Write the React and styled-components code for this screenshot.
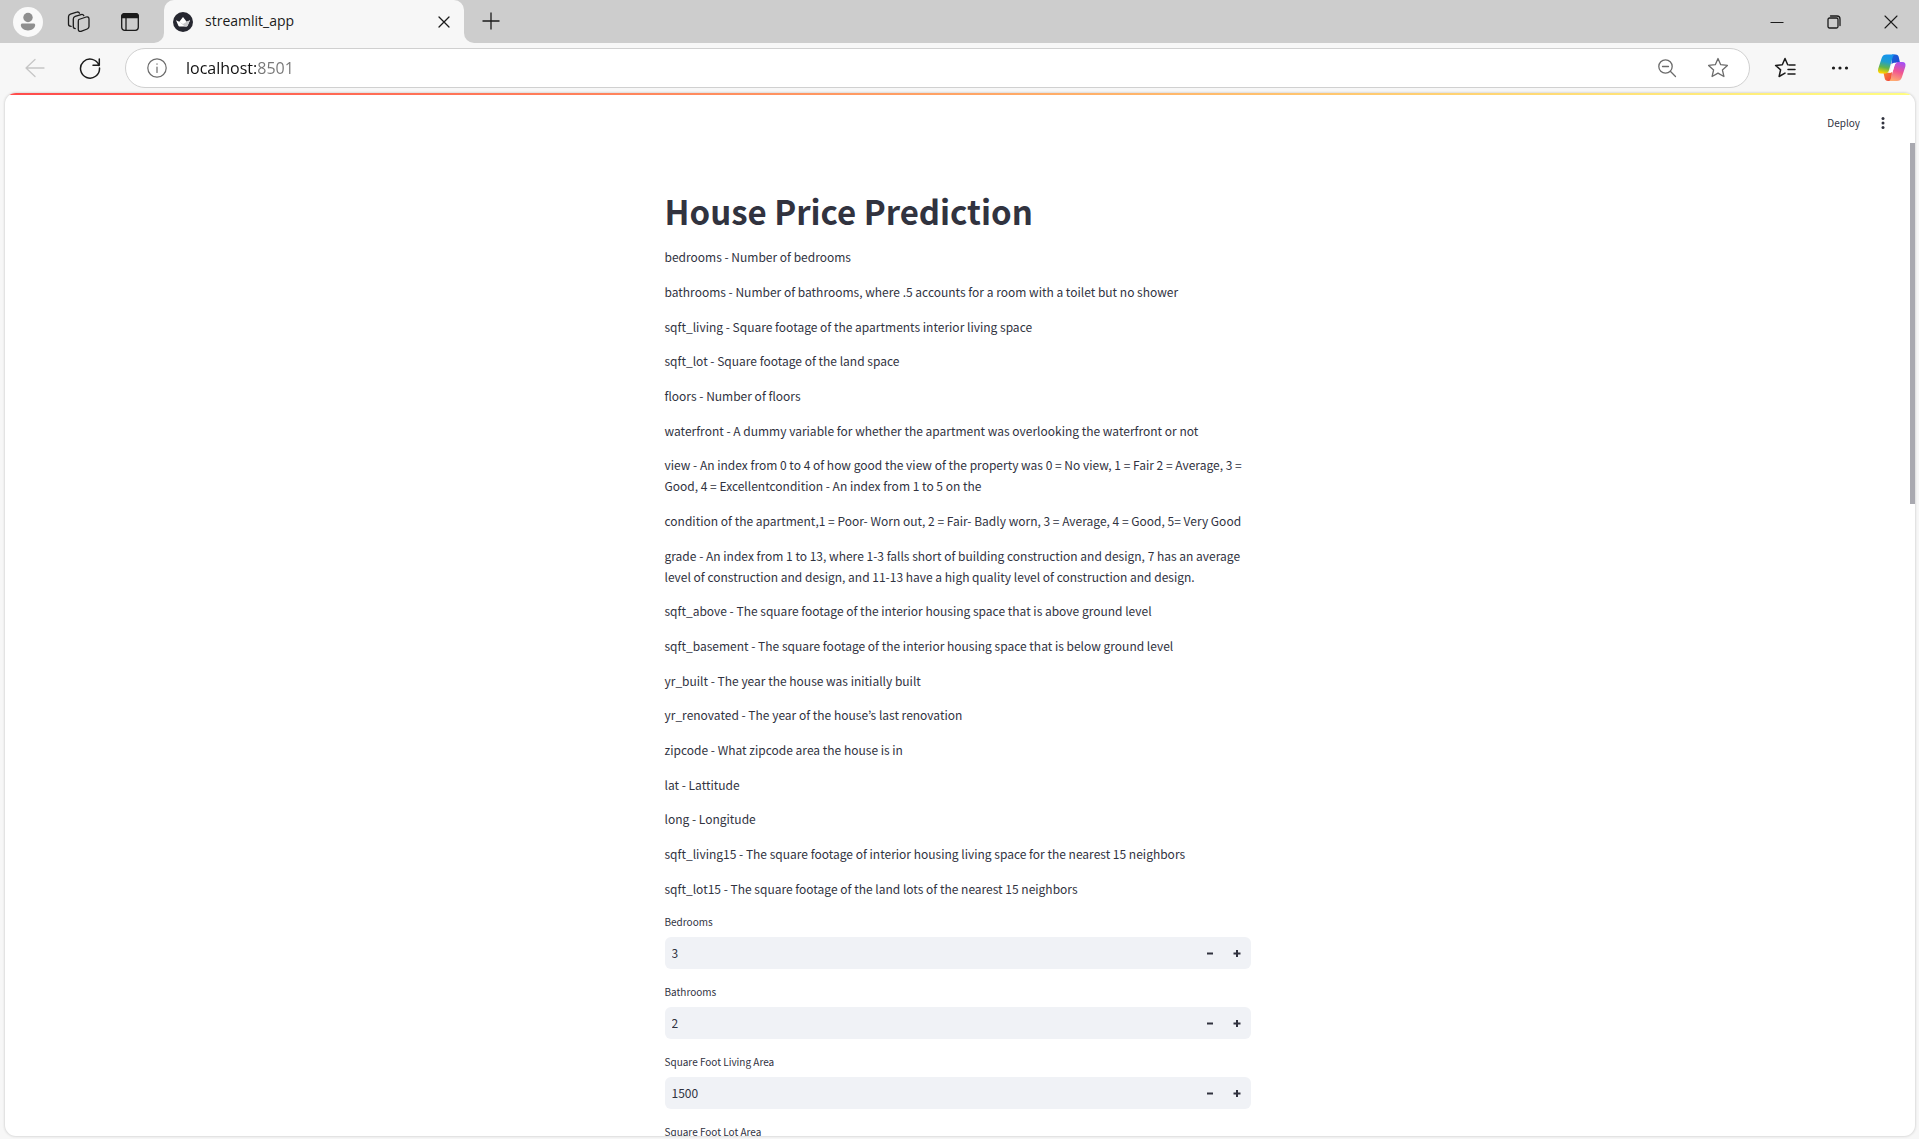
import React, { useState } from "react";
import styled, { createGlobalStyle } from "styled-components";

const uiFont = `"Open Sans", "Noto Sans", sans-serif`;
const appFont = `"Noto Sans CJK KR", "Noto Sans CJK SC", sans-serif`;

const GlobalStyle = createGlobalStyle`
  * { box-sizing: border-box; }
  body { margin: 0; background: #f7f7f7; overflow: hidden; }
  button { border: 0; padding: 0; background: none; color: inherit; font: inherit; cursor: pointer; }
`;

const Window = styled.div`
  display: flex;
  flex-direction: column;
  height: 100vh;
  background: #f7f7f7;
  color: #1b1b1b;
  font-family: ${uiFont};
`;

/* ---------- tab strip ---------- */

const TabStrip = styled.header`
  display: flex;
  height: 43px;
  flex: none;
`;

const StripTools = styled.div`
  display: flex;
  align-items: center;
  gap: 19px;
  width: 164px;
  padding-left: 12px;
  background: #cdcdcd;
  border-bottom-right-radius: 10px;
`;

const TabSlot = styled.div`
  width: 300px;
  background: linear-gradient(#cdcdcd 50%, #f7f7f7 50%);
`;

const Tab = styled.div`
  display: flex;
  align-items: center;
  height: 100%;
  padding: 0 8px;
  border-radius: 10px 10px 0 0;
  background: #f7f7f7;
`;

const TabTitle = styled.span`
  flex: 1;
  padding: 0 0 2px 11px;
  font-size: 14px;
  line-height: 20px;
`;

const StripRest = styled.div`
  display: flex;
  flex: 1;
  justify-content: space-between;
  padding-left: 11px;
  background: #cdcdcd;
  border-bottom-left-radius: 10px;
`;

const WindowControls = styled.div`
  display: flex;
`;

const IconButton = styled.button`
  display: flex;
  align-items: center;
  justify-content: center;
  flex: none;
  width: ${(p) => p.$w || 32}px;
  height: ${(p) => p.$h || 32}px;
  color: ${(p) => p.$color || "#1b1b1b"};
`;

/* ---------- toolbar ---------- */

const Toolbar = styled.div`
  display: flex;
  align-items: center;
  flex: none;
  height: 50px;
  padding: 0 2px 0 7px;
`;

const NavButtons = styled.div`
  display: flex;
  width: 118px;
`;

const AddressBar = styled.div`
  display: flex;
  align-items: center;
  flex: 1;
  height: 40px;
  padding: 0 15px;
  border: 1px solid #d0d0d0;
  border-radius: 20px;
  background: #fff;
`;

const Address = styled.input`
  flex: 1;
  min-width: 0;
  border: 0;
  padding: 0;
  margin-left: 13px;
  outline: 0;
  font: 16px/24px ${uiFont};
  color: transparent;
  background: linear-gradient(90deg, #111 70px, #767676 70px);
  background-clip: text;
`;

const ToolbarEnd = styled.div`
  display: flex;
  align-items: center;
  padding-left: 7px;
`;

/* ---------- page ---------- */

const Page = styled.div`
  display: flex;
  flex-direction: column;
  flex: 1;
  min-height: 0;
  margin: 0 4px 3px 5px;
  overflow: hidden;
  border-radius: 11px;
  background: #fff;
  box-shadow: 0 0 2px 1px #dcdcdc;
  color: #31333f;
  font-family: ${appFont};
`;

const Decoration = styled.div`
  flex: none;
  height: 2px;
  background: linear-gradient(90deg, #ff4b4b, #fffd80);
`;

const AppHeader = styled.div`
  display: flex;
  flex: none;
  align-items: center;
  justify-content: flex-end;
  height: 48px;
  padding: 8px 20px 0 0;
  gap: 11px;
`;

const DeployButton = styled.button`
  padding-bottom: 1px;
  font-size: 10px;
  line-height: 20px;
`;

const Body = styled.div`
  display: flex;
  flex: 1;
  min-height: 0;
`;

const Main = styled.main`
  flex: 1;
  overflow: hidden;
`;

const Column = styled.div`
  width: 586px;
  max-width: 100%;
  margin: 0 auto;
  padding-top: 46px;
`;

const ScrollTrack = styled.div`
  width: 5px;
  flex: none;
`;

const ScrollThumb = styled.div`
  height: 361px;
  background: #a9a9b0;
`;

const Title = styled.h1`
  margin: 0;
  font-size: 33px;
  line-height: 44px;
  font-weight: 700;
`;

const Notes = styled.div`
  display: flex;
  flex-direction: column;
  gap: 13px;
  padding-top: 13px;
`;

const NoteGroup = styled.div`
  display: flex;
  flex-direction: column;
  gap: 14px;
`;

const Note = styled.p`
  margin: 0;
  font-size: 12px;
  line-height: 21px;
`;

const Fields = styled.form`
  display: flex;
  flex-direction: column;
  gap: 13px;
  padding-top: 13px;
`;

const Field = styled.div`
  display: flex;
  flex-direction: column;
  gap: 5px;
`;

const Label = styled.label`
  font-size: 10px;
  line-height: 20px;
`;

const NumberBox = styled.div`
  display: flex;
  height: 32px;
  border-radius: 6px;
  background: #f0f2f6;
  overflow: hidden;
`;

const NumberInput = styled.input`
  flex: 1;
  min-width: 0;
  border: 0;
  padding: 0 7px;
  outline: 0;
  background: none;
  color: #31333f;
  font: 12px/20px ${appFont};
  appearance: textfield;
  &::-webkit-inner-spin-button { appearance: none; margin: 0; }
`;

/* ---------- icons ---------- */

const Svg = ({ size = 20, view = size, children, ...rest }) => (
  <svg
    width={size}
    height={size}
    viewBox={`0 0 ${view} ${view}`}
    fill="none"
    stroke="currentColor"
    strokeWidth="1.3"
    strokeLinecap="round"
    strokeLinejoin="round"
    aria-hidden="true"
    {...rest}
  >
    {children}
  </svg>
);

const ProfileIcon = () => (
  <Svg size={32} stroke="none">
    <circle cx="16" cy="16" r="15" fill="#f9f9f9" />
    <circle cx="16" cy="11.5" r="4.7" fill="#8f8f8f" />
    <path d="M10.5 17.5h11c1 0 1.7.7 1.7 1.6 0 3-3 5.4-7.2 5.4s-7.2-2.400-7.200-5.400c0-.9.7-1.600 1.700-1.600z" fill="#8f8f8f" />
  </Svg>
);

const WorkspacesIcon = () => (
  <Svg size={24}>
    <path d="M11.800 9.500l7.400-2.500c1.500-.5 2.800.3 2.800 1.900v7.700c0 1.200-.7 2-1.800 2.400l-6.200 2.300c-1.500.500-2.700-.3-2.700-1.900v-7.600c0-1.100 0-2 .5-2.300z" />
    <path d="M8.300 18.600c-1.200 0-2-.8-2-2V9c0-1.300.7-2.200 1.900-2.600L14 4.600c1.200-.4 2.300 0 2.800 1" />
    <path d="M4.200 16.300c-1.200 0-2.700-.8-2.700-2V6.700c0-1.300.7-2.200 1.900-2.600l6.300-1.900c1.200-.4 2.400.1 2.800 1" />
  </Svg>
);

const TabActionsIcon = () => (
  <Svg size={20}>
    <rect x="1.700" y="1.700" width="16.600" height="16.600" rx="3" />
    <path d="M1.700 5.500v-1c0-1.700 1.100-2.800 2.800-2.800h11c1.700 0 2.800 1.100 2.800 2.800v1z" fill="currentColor" />
    <path d="M6 6v12" />
  </Svg>
);

const StreamlitMark = () => (
  <Svg size={22} stroke="none">
    <circle cx="11" cy="11" r="10" fill="#262730" />
    <path d="M4 9.200l3.300 1.600L11 6l3.700 4.800L18 9.200l-2.400 5.600c-.2.500-.6.700-1 .7H7.400c-.4 0-.8-.2-1-.7z" fill="#fff" />
    <path d="M14.700 10.800L18 9.200l-2.400 5.600c-.2.500-.6.700-1 .7h-1.800L7.300 10.800 11 13z" fill="#c9c9cc" />
  </Svg>
);

const CopilotIcon = () => (
  <Svg size={30} stroke="none">
    <defs>
      <linearGradient id="cpLeft" x1=".6" y1="0" x2=".4" y2="1">
        <stop offset="0" stopColor="#1593f0" />
        <stop offset=".4" stopColor="#1f9fd0" />
        <stop offset=".7" stopColor="#62b44c" />
        <stop offset="1" stopColor="#ffd400" />
      </linearGradient>
      <linearGradient id="cpTop" x1="0" y1="0" x2="1" y2="1">
        <stop offset="0" stopColor="#1566dc" />
        <stop offset="1" stopColor="#2347cf" />
      </linearGradient>
      <linearGradient id="cpRight" x1=".7" y1="0" x2=".4" y2="1">
        <stop offset="0" stopColor="#a550f4" />
        <stop offset=".5" stopColor="#f05592" />
        <stop offset="1" stopColor="#ffab70" />
      </linearGradient>
      <linearGradient id="cpBottom" x1="0" y1="0" x2="1" y2="1">
        <stop offset="0" stopColor="#f98a30" />
        <stop offset="1" stopColor="#ee4040" />
      </linearGradient>
    </defs>
    <path d="M15 1.500h3.500c2 0 2.800 1 3.300 2.800L23 9.800h-4.500c-2 0-3 .3-4 1.500z" fill="url(#cpTop)" />
    <path d="M14.500 28H11c-2 0-2.800-1-3.300-2.800L6.500 19.800H11c2 0 3-.3 4-1.500z" fill="url(#cpBottom)" />
    <path d="M9.500 1.500h9c-1.500 0-2.300.9-2.800 2.600L12 17.300c-.7 2.200-1.900 3.200-3.900 3.200H4.200c-2.700 0-3.800-2-3-4.800L4.700 5c.8-2.500 2.400-3.500 4.800-3.500z" fill="url(#cpLeft)" />
    <path d="M20 28h-9c1.500 0 2.300-.9 2.800-2.600l3.700-13.200c.7-2.200 1.900-3.200 3.900-3.200h3.900c2.700 0 3.800 2 3 4.800l-3.500 10.700c-.8 2.500-2.400 3.500-4.800 3.500z" fill="url(#cpRight)" />
    <path d="M17 10.500c1.200-.5 1.500-.7 3.200-.8-1.500.5-2.200 1.300-2.700 3l-1.500 5c-.5 1.500-1.600 2-4.200 2 1.200-.6 1.500-1.700 1.900-3l1.300-4.200c.4-1.100 1-1.600 2-2z" fill="#fff" />
  </Svg>
);

const starPath = "M11 1.500l2.700 6.200 6.700.7-5 4.500 1.500 6.600L11 16.100l-5.900 3.400 1.500-6.600-5-4.500 6.700-.7z";

/* ---------- content ---------- */

const noteGroups = [
  [
    "bedrooms - Number of bedrooms",
    "bathrooms - Number of bathrooms, where .5 accounts for a room with a toilet but no shower",
    "sqft_living - Square footage of the apartments interior living space",
  ],
  [
    "sqft_lot - Square footage of the land space",
    "floors - Number of floors",
    "waterfront - A dummy variable for whether the apartment was overlooking the waterfront or not",
  ],
  [
    "view - An index from 0 to 4 of how good the view of the property was 0 = No view, 1 = Fair 2 = Average, 3 = Good, 4 = Excellentcondition - An index from 1 to 5 on the",
    "condition of the apartment,1 = Poor- Worn out, 2 = Fair- Badly worn, 3 = Average, 4 = Good, 5= Very Good",
    "grade - An index from 1 to 13, where 1-3 falls short of building construction and design, 7 has an average level of construction and design, and 11-13 have a high quality level of construction and design.",
  ],
  [
    "sqft_above - The square footage of the interior housing space that is above ground level",
    "sqft_basement - The square footage of the interior housing space that is below ground level",
    "yr_built - The year the house was initially built",
  ],
  [
    "yr_renovated - The year of the house’s last renovation",
    "zipcode - What zipcode area the house is in",
    "lat - Lattitude",
  ],
  [
    "long - Longitude",
    "sqft_living15 - The square footage of interior housing living space for the nearest 15 neighbors",
    "sqft_lot15 - The square footage of the land lots of the nearest 15 neighbors",
  ],
];

const fields = [
  { id: "bedrooms", label: "Bedrooms", initial: 3 },
  { id: "bathrooms", label: "Bathrooms", initial: 2 },
  { id: "sqft-living", label: "Square Foot Living Area", initial: 1500 },
  { id: "sqft-lot", label: "Square Foot Lot Area", initial: "" },
];

function NumberField({ id, label, initial }) {
  const [value, setValue] = useState(initial);
  const step = (by) => setValue((v) => Number(v) + by);
  return (
    <Field>
      <Label htmlFor={id}>{label}</Label>
      <NumberBox>
        <NumberInput id={id} type="number" value={value} onChange={(e) => setValue(e.target.value)} />
        <IconButton type="button" $w={27} $color="#31333f" aria-label={`Decrease ${label}`} onClick={() => step(-1)}>
          <Svg size={8} strokeWidth="2" strokeLinecap="butt"><path d="M1 4.500h6" /></Svg>
        </IconButton>
        <IconButton type="button" $w={27} $color="#31333f" aria-label={`Increase ${label}`} onClick={() => step(1)}>
          <Svg size={8} strokeWidth="2" strokeLinecap="butt"><path d="M.5 4.500h7M4 1v7" /></Svg>
        </IconButton>
      </NumberBox>
    </Field>
  );
}

export default function App() {
  const [url, setUrl] = useState("localhost:8501");
  return (
    <Window>
      <GlobalStyle />
      <TabStrip>
        <StripTools>
          <IconButton aria-label="Profile"><ProfileIcon /></IconButton>
          <IconButton aria-label="Workspaces"><WorkspacesIcon /></IconButton>
          <IconButton aria-label="Tab actions"><TabActionsIcon /></IconButton>
        </StripTools>
        <TabSlot>
          <Tab>
            <StreamlitMark />
            <TabTitle>streamlit_app</TabTitle>
            <IconButton $w={24} aria-label="Close tab">
              <Svg size={12}><path d="M1 1l10 10M11 1L1 11" /></Svg>
            </IconButton>
          </Tab>
        </TabSlot>
        <StripRest>
          <IconButton $h={42} aria-label="New tab">
            <Svg size={18} strokeLinecap="butt"><path d="M9 .5v17M.5 9h17" /></Svg>
          </IconButton>
          <WindowControls>
            <IconButton $w={57} $h={43} aria-label="Minimize">
              <Svg size={14} strokeWidth="1" strokeLinecap="butt"><path d="M.5 7.500h13" /></Svg>
            </IconButton>
            <IconButton $w={57} $h={43} aria-label="Restore">
              <Svg size={14}>
                <rect x="1" y="3" width="10" height="10" rx="1.500" />
                <path d="M3.500 1H10c1.900 0 3 1.100 3 3v6.500" />
              </Svg>
            </IconButton>
            <IconButton $w={57} $h={43} aria-label="Close">
              <Svg size={14} strokeWidth="1.100"><path d="M1 1l12 12M13 1L1 13" /></Svg>
            </IconButton>
          </WindowControls>
        </StripRest>
      </TabStrip>

      <Toolbar>
        <NavButtons>
          <IconButton $w={55} $color="#c6c6c6" aria-label="Back">
            <Svg size={20}><path d="M19 10H1M10 1.500L1 10l9 8.500" /></Svg>
          </IconButton>
          <IconButton $w={55} aria-label="Reload">
            <Svg size={22} strokeWidth="1.500"><path d="M20 8.500a9.500 9.500 0 1 0 .5 2.500M20.300 2v6.300H14" /></Svg>
          </IconButton>
        </NavButtons>
        <AddressBar>
          <IconButton $color="#6b6b6b" aria-label="Site information">
            <Svg size={20} strokeWidth="1.200"><circle cx="10" cy="10" r="9.200" /><path d="M10 9v5.500M10 5.800v.4" /></Svg>
          </IconButton>
          <Address aria-label="Address" value={url} onChange={(e) => setUrl(e.target.value)} />
          <IconButton $w={70} $color="#6b6b6b" aria-label="Zoom out">
            <Svg size={20}><circle cx="8.500" cy="8.500" r="6.700" /><path d="M13.300 13.300l5.200 5.200M5.500 8.500h6" /></Svg>
          </IconButton>
          <IconButton $color="#6b6b6b" aria-label="Add to favorites">
            <Svg size={22}><path d={starPath} /></Svg>
          </IconButton>
        </AddressBar>
        <ToolbarEnd>
          <IconButton $w={55} aria-label="Favorites">
            <Svg size={22} strokeWidth="1.500">
              <path d="M11 16.100l-5.900 3.400 1.500-6.600-5-4.500 6.700-.7L11 1.500l2.700 6.200M15 8h6M14 12.500h7M14 17h7" />
            </Svg>
          </IconButton>
          <IconButton $w={55} aria-label="Settings and more">
            <Svg size={18} fill="currentColor" stroke="none">
              <circle cx="2.500" cy="9" r="1.600" /><circle cx="9" cy="9" r="1.600" /><circle cx="15.500" cy="9" r="1.600" />
            </Svg>
          </IconButton>
          <IconButton $w={50} aria-label="Copilot"><CopilotIcon /></IconButton>
        </ToolbarEnd>
      </Toolbar>

      <Page>
        <Decoration />
        <AppHeader>
          <DeployButton>Deploy</DeployButton>
          <IconButton $w={24} $h={24} $color="#31333f" aria-label="Main menu">
            <Svg size={14} fill="currentColor" stroke="none">
              <circle cx="7" cy="2.500" r="1.500" /><circle cx="7" cy="7" r="1.500" /><circle cx="7" cy="11.500" r="1.500" />
            </Svg>
          </IconButton>
        </AppHeader>
        <Body>
          <Main>
            <Column>
              <Title>House Price Prediction</Title>
              <Notes>
                {noteGroups.map((group) => (
                  <NoteGroup key={group[0]}>
                    {group.map((text) => <Note key={text}>{text}</Note>)}
                  </NoteGroup>
                ))}
              </Notes>
              <Fields>
                {fields.map((f) => <NumberField key={f.id} {...f} />)}
              </Fields>
            </Column>
          </Main>
          <ScrollTrack><ScrollThumb /></ScrollTrack>
        </Body>
      </Page>
    </Window>
  );
}
